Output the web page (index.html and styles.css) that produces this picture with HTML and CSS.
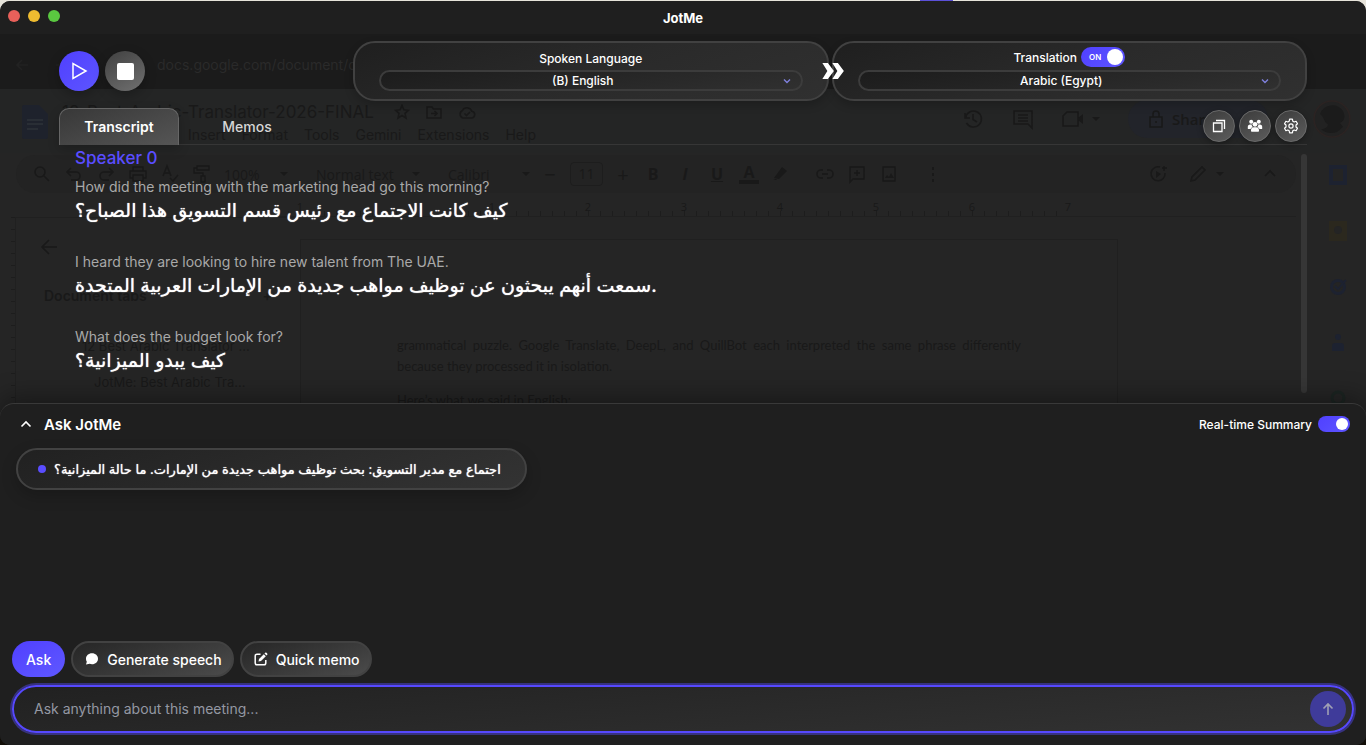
FILE: index.html
```html
<!DOCTYPE html>
<html lang="en">
<head>
    <meta charset="UTF-8">
    <meta name="viewport" content="width=device-width, initial-scale=1.0">
    <title>JotMe</title>
    <link rel="stylesheet" href="styles.css">
</head>
<body>
    <div class="window">
        <!-- Dimmed document showing through the overlay -->
        <div class="backdrop" aria-hidden="true">
            <div class="browser-bar">
                <svg width="16" height="16" viewBox="0 0 16 16"><path d="M14 8H3M8 3L3 8l5 5"/></svg>
                <svg width="16" height="16" viewBox="0 0 16 16"><path d="M2 8h11M8 3l5 5-5 5"/></svg>
                <span class="address">docs.google.com/document/d</span>
            </div>
            <div class="doc-header">
                <svg class="doc-logo" width="26" height="34" viewBox="0 0 26 34"><path d="M2 0h15l9 9v23a2 2 0 0 1-2 2H2a2 2 0 0 1-2-2V2a2 2 0 0 1 2-2z"/><path class="doc-lines" d="M5 15h16M5 19h16M5 24h11"/></svg>
                <div class="doc-heading">
                    <div class="doc-title">
                        <span>12-Best-Arabic-Translator-2026-FINAL</span>
                        <svg width="16" height="16" viewBox="0 0 16 16"><path d="M8 1.500l1.900 4.300 4.600.5-3.500 3 1 4.700-4-2.500L4 14l1-4.700-3.500-3 4.600-.5z"/></svg>
                        <svg width="16" height="16" viewBox="0 0 16 16"><path d="M1 3h5l1.500 2H15v9H1zM5 9.500h5M8.500 7l2.500 2.500L8.500 12"/></svg>
                        <svg width="18" height="16" viewBox="0 0 18 16"><path d="M5 14a4 4 0 0 1-.5-7.500 5 5 0 0 1 9.300.8A3.400 3.400 0 0 1 14 14zM6.500 9.500l2 2 3.500-3.500"/></svg>
                    </div>
                    <div class="doc-menu">
                        <span>Insert</span><span>Format</span><span>Tools</span><span>Gemini</span><span>Extensions</span><span>Help</span>
                    </div>
                </div>
                <div class="doc-actions">
                    <svg width="22" height="22" viewBox="0 0 22 22"><path d="M3 5v5h5M3.500 10a8 8 0 1 1 1 5M11 6v5.500l4 2.500"/></svg>
                    <svg width="22" height="22" viewBox="0 0 22 22"><path d="M2 3h18v17l-4-4H2zM6 7h10M6 10h10M6 13h10"/></svg>
                    <svg width="22" height="22" viewBox="0 0 22 22"><path d="M5 4h11v14H1V8z"/><path class="solid" d="M16 10l5-4v10l-5-4z"/></svg>
                    <i class="caret"></i>
                    <span class="share">
                        <svg width="16" height="18" viewBox="0 0 16 18"><path d="M2 7h12v10H2zM5 7V4a3 3 0 0 1 6 0v3M8 11v2"/></svg>
                        Share
                    </span>
                    <svg class="avatar" width="40" height="40" viewBox="0 0 40 40"><circle cx="20" cy="20" r="18"/><path class="face" d="M8 15a13 13 0 0 1 23-3c3 6 1 10-3 12l3 4-6 5c-6 2-12 1-16-3 4 0 7-2 7-5-4-1-3-6-8-10z"/></svg>
                </div>
            </div>
            <div class="doc-toolbar">
                <svg width="20" height="20" viewBox="0 0 20 20"><path d="M12 12l5 5M13 8a5 5 0 1 1-10 0 5 5 0 0 1 10 0z"/></svg>
                <svg width="20" height="20" viewBox="0 0 20 20"><path d="M7 4L3 8l4 4M3 8h9a4 4 0 0 1 0 8H7"/></svg>
                <svg width="20" height="20" viewBox="0 0 20 20"><path d="M13 4l4 4-4 4M17 8H8a4 4 0 0 0 0 8h5"/></svg>
                <svg width="20" height="20" viewBox="0 0 20 20"><path d="M5 7V3h10v4M5 14H2V7h16v7h-3M5 11h10v6H5z"/></svg>
                <svg width="20" height="20" viewBox="0 0 20 20"><path d="M3 12L7 2l4 10M4 9h6M10 14l3 3 5-6"/></svg>
                <svg width="20" height="20" viewBox="0 0 20 20"><path d="M5 2h12v4H5zM5 4H2v5h9v3M9 12h4v6H9z"/></svg>
                <span class="tool-zoom">100%</span><i class="caret"></i>
                <span class="tool-style">Normal text</span><i class="caret"></i>
                <span class="tool-font">Calibri</span><i class="caret"></i>
                <span class="tool-sign">−</span><span class="tool-size">11</span><span class="tool-sign">+</span>
                <b>B</b><b><em>I</em></b><b><u>U</u></b><b class="tool-color">A</b>
                <svg width="20" height="20" viewBox="0 0 20 20"><path class="solid" d="M3 14l8-11 5 4-8 8zM2 16l3-1 1 1z"/></svg>
                <svg class="group" width="20" height="20" viewBox="0 0 20 20"><path d="M8 6H6a4 4 0 0 0 0 8h2M12 6h2a4 4 0 0 1 0 8h-2M7 10h6"/></svg>
                <svg width="20" height="20" viewBox="0 0 20 20"><path d="M3 3h14v12H6l-3 3zM10 6v6M7 9h6"/></svg>
                <svg width="20" height="20" viewBox="0 0 20 20"><path d="M4 3h12v14H4z"/><path class="solid" d="M6 14l2-3 2 2 2-4 3 5z"/></svg>
                <svg class="group" width="20" height="20" viewBox="0 0 20 20"><path class="solid" d="M9 3h2v3H9zM9 9h2v3H9zM9 15h2v3H9z"/></svg>
                <span class="tool-end">
                    <svg width="20" height="20" viewBox="0 0 20 20"><path d="M12 3a7 7 0 1 0 5 6M16 2v5M14 4h5"/><path class="solid" d="M8 7l5 3-5 4z"/></svg>
                    <svg width="20" height="20" viewBox="0 0 20 20"><path d="M3 17l1-4L14 3l3 3L7 16z"/></svg>
                    <i class="caret"></i>
                    <svg class="fold" width="20" height="20" viewBox="0 0 20 20"><path d="M5 12l5-5 5 5"/></svg>
                </span>
            </div>
            <div class="ruler">
                <span>1</span><span></span><span>1</span><span>2</span><span>3</span><span>4</span><span>5</span><span>6</span><span>7</span>
            </div>
            <div class="doc-body">
                <div class="side-ruler"></div>
                <div class="outline">
                    <svg width="18" height="18" viewBox="0 0 18 18"><path d="M17 9H2M9 2L2 9l7 7"/></svg>
                    <div class="outline-title"><span>Document tabs</span><span>+</span></div>
                    <p>12 Best Arabic Translator …</p>
                    <p class="nested">JotMe: Best Arabic Tra…</p>
                </div>
                <div class="page">
                    <p>grammatical puzzle. Google Translate, DeepL, and QuillBot each interpreted the same phrase differently because they processed it in isolation.</p>
                    <p>Here’s what we said in English:</p>
                </div>
                <div class="rail">
                    <svg width="18" height="20" viewBox="0 0 18 20"><path class="blue" d="M0 0h18v20H0z"/><path class="hole" d="M4 4h10v12H4z"/></svg>
                    <svg width="18" height="20" viewBox="0 0 18 20"><path class="yellow" d="M0 0h18v20H0z"/><circle class="hole" cx="9" cy="9" r="4"/></svg>
                    <svg width="18" height="20" viewBox="0 0 18 20"><circle class="blue" cx="9" cy="10" r="8"/><circle class="hole" cx="9" cy="10" r="5"/><path class="tick" d="M6 9l3 3 8-9"/></svg>
                    <svg width="18" height="20" viewBox="0 0 18 20"><path class="blue" d="M3 18v-5a3 3 0 0 1 3-3h6a3 3 0 0 1 3 3v5zM6 4a3 3 0 1 1 6 0 3 3 0 0 1-6 0z"/></svg>
                    <svg width="18" height="20" viewBox="0 0 18 20"><circle class="ring" cx="9" cy="9" r="6"/></svg>
                </div>
            </div>
        </div>

        <header class="titlebar">
            <div class="lights">
                <span class="light red"></span>
                <span class="light amber"></span>
                <span class="light green"></span>
            </div>
            <h1>JotMe</h1>
        </header>

        <section class="controls">
            <button class="round play" aria-label="Play">
                <svg width="20" height="20" viewBox="0 0 20 20"><path d="M4 2.500v15L17 10z" fill="none" stroke="#fff" stroke-width="1.500" stroke-linejoin="miter"/></svg>
            </button>
            <button class="round stop" aria-label="Stop"><span></span></button>
            <div class="languages">
                <div class="lang-card">
                    <label for="spoken">Spoken Language</label>
                    <div class="select-wrap">
                        <select id="spoken"><option>(B) English</option></select>
                        <svg width="8" height="6" viewBox="0 0 8 6"><path d="M1 1.500l3 3 3-3"/></svg>
                    </div>
                </div>
                <svg class="arrows" width="24" height="18" viewBox="0 0 24 18"><path d="M1 1h5.500l6 8-6 8H1l5-8zM11 1h5.500l6 8-6 8H11l5-8z"/></svg>
                <div class="lang-card">
                    <div class="lang-top">
                        <label for="target">Translation</label>
                        <label class="switch big">
                            <input type="checkbox" aria-label="Translation on" checked>
                            <span class="on">ON</span>
                        </label>
                    </div>
                    <div class="select-wrap">
                        <select id="target"><option>Arabic (Egypt)</option></select>
                        <svg width="8" height="6" viewBox="0 0 8 6"><path d="M1 1.500l3 3 3-3"/></svg>
                    </div>
                </div>
            </div>
        </section>

        <nav class="tabs">
            <button class="tab active">Transcript</button>
            <button class="tab">Memos</button>
            <div class="tools">
                <button class="tool" aria-label="Copy">
                    <svg width="16" height="16" viewBox="0 0 16 16" fill="none" stroke="#fff" stroke-width="1.300"><path d="M2.500 5h8.500v8.500H2.500zM5 2.500h8.500V11"/></svg>
                </button>
                <button class="tool" aria-label="Participants">
                    <svg width="16" height="16" viewBox="0 0 16 16" fill="#fff"><circle cx="4.200" cy="3.800" r="2"/><circle cx="11.800" cy="3.800" r="2"/><circle cx="8" cy="6.300" r="2.400"/><path d="M.8 10.500V9a2.500 2.500 0 0 1 2.500-2.600h1.300A4 4 0 0 0 5.800 9 4 4 0 0 0 3.500 11H1.300a.5.5 0 0 1-.5-.5zM15.200 10.500V9a2.500 2.500 0 0 0-2.500-2.600h-1.300A4 4 0 0 1 10.200 9a4 4 0 0 1 2.300 2h2.200a.5.5 0 0 0 .5-.5zM4 13v-.8a3 3 0 0 1 3-2.900h2a3 3 0 0 1 3 2.900v.8a.8.8 0 0 1-.8.800H4.800A.8.8 0 0 1 4 13z"/></svg>
                </button>
                <button class="tool" aria-label="Settings">
                    <svg width="16" height="16" viewBox="0 0 16 16" fill="none" stroke="#fff" stroke-width="1.200" stroke-linejoin="round"><path d="M6.600 1.200h2.800l.4 2 1.400.8 1.900-.7 1.400 2.400L13 7v2l1.500 1.300-1.400 2.400-1.900-.7-1.400.8-.4 2H6.600l-.4-2-1.400-.8-1.900.7-1.400-2.400L3 9V7L1.500 5.700l1.400-2.400 1.900.7 1.400-.8z"/><circle cx="8" cy="8" r="2.100"/></svg>
                </button>
            </div>
        </nav>

        <main class="transcript">
            <div class="lines">
                <h2>Speaker 0</h2>
                <div class="entry">
                    <p class="source">How did the meeting with the marketing head go this morning?</p>
                    <p class="translated" lang="ar">كيف كانت الاجتماع مع رئيس قسم التسويق هذا الصباح؟</p>
                </div>
                <div class="entry">
                    <p class="source">I heard they are looking to hire new talent from The UAE.</p>
                    <p class="translated" lang="ar">سمعت أنهم يبحثون عن توظيف مواهب جديدة من الإمارات العربية المتحدة.</p>
                </div>
                <div class="entry">
                    <p class="source">What does the budget look for?</p>
                    <p class="translated" lang="ar">كيف يبدو الميزانية؟</p>
                </div>
            </div>
            <div class="scrollbar"></div>
        </main>

        <section class="ask-panel">
            <div class="ask-head">
                <button class="collapse" aria-label="Collapse">
                    <svg width="12" height="8" viewBox="0 0 12 8"><path d="M1.500 6.500L6 2l4.500 4.500" fill="none" stroke="#fff" stroke-width="1.600"/></svg>
                </button>
                <h2>Ask JotMe</h2>
                <label class="summary-label" for="realtime">Real-time Summary</label>
                <span class="switch small"><input type="checkbox" id="realtime" checked></span>
            </div>
            <div class="summary">
                <span class="dot"></span>
                <p lang="ar">اجتماع مع مدير التسويق: بحث توظيف مواهب جديدة من الإمارات. ما حالة الميزانية؟</p>
            </div>
            <div class="modes">
                <button class="mode primary">Ask</button>
                <button class="mode">
                    <svg width="14" height="14" viewBox="0 0 14 14"><path d="M7 1.200c3.500 0 6 2.400 6 5.500s-2.500 5.500-6 5.500c-.9 0-1.700-.1-2.400-.4L1 12.600l.8-2.800A5 5 0 0 1 1 6.700c0-3.100 2.500-5.500 6-5.500z" fill="#fff"/></svg>
                    Generate speech
                </button>
                <button class="mode">
                    <svg width="14" height="14" viewBox="0 0 14 14"><path d="M6.500 2.200H3A1.800 1.800 0 0 0 1.200 4v7A1.800 1.800 0 0 0 3 12.800h7a1.800 1.800 0 0 0 1.800-1.800V8" fill="none" stroke="#fff" stroke-width="1.500"/><path d="M4.500 9.500L5 7l4.800-4.800 2 2L7 9zM10.500 1.500l.7-.7a.9.9 0 0 1 1.300 0l.7.7a.9.900 0 0 1 0 1.300l-.7.7z" fill="#fff"/></svg>
                    Quick memo
                </button>
            </div>
            <form class="composer">
                <input type="text" aria-label="Question" placeholder="Ask anything about this meeting...">
                <button type="button" class="send" aria-label="Send">
                    <svg width="14" height="14" viewBox="0 0 14 14"><path d="M7 13V2M2.500 6.500L7 2l4.500 4.500"/></svg>
                </button>
            </form>
        </section>
    </div>
</body>
</html>
```
FILE: styles.css
```css
* {
    box-sizing: border-box;
}

body {
    margin: 0;
    padding-top: 1px;
    min-height: 100vh;
    display: flex;
    font-family: Inter, 'DejaVu Sans', sans-serif;
    font-size: 14px;
    color: #fff;
    background:
        linear-gradient(#5b50d8, #5b50d8) 69% 0 / 33px 1px no-repeat,
        linear-gradient(#e6e3da 50%, #120e08 50%);
}

h1, h2, p {
    margin: 0;
}

button {
    font: inherit;
    color: inherit;
    border: none;
    padding: 0;
    cursor: pointer;
    display: flex;
    align-items: center;
    justify-content: center;
}

.window {
    position: relative;
    flex: 1;
    display: flex;
    flex-direction: column;
    overflow: hidden;
    border-radius: 10px;
    background: #252525;
}

/* Title bar */
.titlebar {
    position: relative;
    height: 33px;
    display: grid;
    grid-template-columns: 1fr auto 1fr;
    align-items: center;
    padding: 0 8px;
    background: #1f1f1f;
}

.titlebar h1 {
    font-size: 13px;
    font-weight: 700;
}

.lights {
    display: flex;
    gap: 8px;
    padding-bottom: 4px;
}

.light {
    width: 12px;
    height: 12px;
    border-radius: 50%;
}

.red { background: #e8605a; }
.amber { background: #efbc30; }
.green { background: #5ac840; }

/* Player and languages */
.controls {
    position: relative;
    display: flex;
    align-items: center;
    gap: 6px;
    padding: 7px 59px;
}

.round {
    width: 40px;
    height: 40px;
    border-radius: 50%;
    box-shadow: 0 4px 12px rgba(0, 0, 0, 0.25);
}

.play {
    background: linear-gradient(135deg, #5040ff, #5d55ff);
}

.stop {
    background: linear-gradient(150deg, #404040, #707070);
}

.stop span {
    width: 17px;
    height: 17px;
    border-radius: 2px;
    background: #fff;
}

.languages {
    position: relative;
    flex: 1;
    display: grid;
    grid-template-columns: 1fr 1fr;
    gap: 3px;
    margin-left: 202px;
}

.lang-card {
    display: flex;
    flex-direction: column;
    align-items: center;
    height: 60px;
    padding: 6px 24px;
    border: 2px solid #414141;
    border-radius: 22px;
    background: linear-gradient(160deg, #1f1f1f, #2a2a2a 50%, #303030);
    box-shadow: 0 4px 10px rgba(0, 0, 0, 0.2);
    font-size: 12px;
    font-weight: 500;
}

.lang-card > label {
    line-height: 20px;
    padding-bottom: 1px;
}

.lang-top {
    display: flex;
    align-items: center;
    gap: 4px;
    height: 21px;
    padding-bottom: 5px;
}

.select-wrap {
    position: relative;
    width: 100%;
}

.select-wrap select {
    appearance: none;
    display: block;
    width: 100%;
    height: 21px;
    padding: 0 24px 0 8px;
    border: 2px solid #3c3c3c;
    border-radius: 11px;
    background: linear-gradient(170deg, #1c1c1c, #303030);
    color: #fff;
    font: inherit;
    line-height: 16px;
    text-align-last: center;
}

.select-wrap svg {
    position: absolute;
    right: 12px;
    top: 8px;
    fill: none;
    stroke: #7f80dc;
    stroke-width: 1.4;
}

.arrows {
    position: absolute;
    left: 50%;
    top: 50%;
    transform: translate(-36%, -50%);
    z-index: 1;
    fill: #fff;
}

/* Switches */
.switch {
    position: relative;
    display: flex;
    align-items: center;
}

.switch input {
    appearance: none;
    margin: 0;
    display: flex;
    align-items: center;
    justify-content: flex-end;
    background: linear-gradient(135deg, #5040ff, #5d55ff);
}

.switch input::after {
    content: "";
    border-radius: 50%;
    background: #fff;
}

.big input {
    width: 44px;
    height: 20px;
    padding: 2px;
    border-radius: 10px;
}

.big input::after {
    width: 16px;
    height: 16px;
}

.small input {
    width: 32px;
    height: 16px;
    padding: 2px;
    border-radius: 8px;
}

.small input::after {
    width: 12px;
    height: 12px;
}

.switch .on {
    position: absolute;
    left: 8px;
    font-size: 8px;
    font-weight: 600;
}

/* Tabs */
.tabs {
    position: relative;
    display: flex;
    gap: 8px;
    height: 37px;
    margin: 0 59px;
    border-bottom: 1px solid #363636;
}

.tab {
    width: 120px;
    height: 37px;
    background: none;
    color: #d6d6d6;
    font-weight: 500;
}

.tab.active {
    color: #fff;
    font-weight: 600;
    border: 1px solid #666;
    border-bottom: none;
    padding-bottom: 2px;
    border-radius: 10px 10px 0 0;
    background: linear-gradient(160deg, #383838, #555);
    box-shadow: 0 4px 12px rgba(0, 0, 0, 0.2);
}

.tools {
    display: flex;
    gap: 4px;
    margin-left: auto;
    padding-top: 2px;
}

.tool {
    width: 32px;
    height: 32px;
    border: 1px solid #6a6a6a;
    border-radius: 50%;
    background: linear-gradient(150deg, #3c3c3c, #5c5c5c);
    box-shadow: 0 2px 6px rgba(0, 0, 0, 0.3);
}

/* Transcript */
.transcript {
    position: relative;
    display: flex;
    justify-content: space-between;
    padding: 0 59px 10px;
}

.lines {
    padding: 0 16px 17px;
}

.lines h2 {
    font-size: 17px;
    font-weight: 500;
    line-height: 26px;
    padding-bottom: 4px;
    color: #5a4dff;
}

.entry {
    height: 51px;
    margin-bottom: 24px;
}

.entry:last-child {
    margin-bottom: 0;
}

.source {
    line-height: 24px;
    color: #a9a9a9;
}

.translated {
    font-size: 19px;
    line-height: 24px;
    text-shadow: 0 0 1px #fff;
}

.scrollbar {
    width: 6px;
    margin-top: 9px;
    border-radius: 3px;
    background: #363636;
}

/* Ask panel */
.ask-panel {
    position: relative;
    flex: 1;
    display: flex;
    flex-direction: column;
    padding: 8px 12px 12px;
    border-top: 1px solid #393939;
    border-radius: 14px 14px 0 0;
    background: #1f1f1f;
    box-shadow: 0 -6px 24px rgba(0, 0, 0, 0.35);
}

.ask-head {
    display: flex;
    align-items: center;
    height: 24px;
    padding: 0 4px;
}

.ask-head h2 {
    font-size: 15px;
    font-weight: 600;
}

.collapse {
    width: 20px;
    height: 20px;
    margin-right: 8px;
    background: none;
}

.summary-label {
    margin-left: auto;
    margin-right: 6px;
    font-size: 12px;
    font-weight: 500;
}

.summary {
    align-self: flex-start;
    display: flex;
    align-items: center;
    gap: 8px;
    height: 42px;
    margin: 12px 4px;
    padding: 0 24px 0 20px;
    border: 2px solid #424242;
    border-radius: 21px;
    background: linear-gradient(160deg, #212121, #333);
    box-shadow: 0 6px 16px rgba(0, 0, 0, 0.2);
    font-size: 13px;
}

.summary p {
    text-shadow: 0 0 1px #fff;
}

.dot {
    width: 8px;
    height: 8px;
    border-radius: 50%;
    background: #5a4dff;
}

.modes {
    display: flex;
    gap: 6px;
    margin-top: auto;
}

.mode {
    gap: 8px;
    height: 36px;
    padding: 0 10px 0 12px;
    border: 2px solid #424242;
    border-radius: 18px;
    background: linear-gradient(160deg, #262626, #4b4b4b);
    font-weight: 500;
}

.mode.primary {
    border: none;
    padding: 0 14px;
    background: linear-gradient(150deg, #5040ff, #5f58ff);
}

.composer {
    display: flex;
    align-items: center;
    height: 48px;
    margin-top: 8px;
    padding: 0 6px 0 20px;
    border: 2px solid #5648ff;
    border-radius: 24px;
    background: linear-gradient(175deg, #212121, #323232);
    box-shadow: 0 0 0 2px #37327f;
}

.composer input {
    flex: 1;
    min-width: 0;
    padding: 0 0 2px;
    border: none;
    outline: none;
    background: none;
    color: #fff;
    font: inherit;
}

.composer input::placeholder {
    color: #9498a3;
}

.send {
    width: 36px;
    height: 36px;
    border-radius: 50%;
    background: #3f3b9a;
}

.send svg {
    fill: none;
    stroke: #a0a0b4;
    stroke-width: 1.6;
}

/* Document behind the overlay */
.backdrop {
    position: absolute;
    top: 33px;
    left: 0;
    right: 0;
    bottom: 0;
    overflow: hidden;
    color: #191919;
    white-space: nowrap;
    font-family: 'Open Sans', sans-serif;
}

.backdrop svg {
    flex: none;
    fill: none;
    stroke: #191919;
    stroke-width: 1.6;
}

.backdrop .solid {
    fill: #191919;
    stroke: none;
}

.browser-bar {
    display: flex;
    align-items: center;
    gap: 24px;
    height: 55px;
    padding: 6px 14px 0;
    background: #1b1b1b;
}

.browser-bar svg {
    stroke: #222;
}

.address {
    margin-left: 63px;
    font-size: 14px;
    font-family: Inter, sans-serif;
    color: #2a2a2a;
}

.doc-header {
    display: flex;
    height: 64px;
    padding: 11px 14px 0 22px;
    background: #242525;
}

.backdrop .doc-logo {
    margin-top: 5px;
    fill: #1e222c;
    stroke: none;
}

.backdrop .doc-lines {
    stroke: #292e35;
    stroke-width: 2;
}

.doc-heading {
    margin-left: 14px;
}

.doc-title {
    display: flex;
    align-items: center;
    gap: 16px;
    height: 24px;
    font-family: Inter, sans-serif;
    font-size: 17px;
}

.doc-title span {
    margin-right: 4px;
}

.doc-menu {
    display: flex;
    gap: 16px;
    padding-left: 126px;
    line-height: 22px;
    font-family: Inter, sans-serif;
    font-size: 14px;
}

.doc-actions {
    display: flex;
    align-items: center;
    gap: 28px;
    height: 38px;
    margin-left: auto;
}

.doc-actions .caret {
    margin-left: -20px;
}

.share {
    display: flex;
    align-items: center;
    gap: 8px;
    width: 140px;
    height: 38px;
    margin-right: 16px;
    padding-left: 20px;
    border-radius: 19px;
    background: #22242a;
    font-size: 15px;
    font-weight: 600;
}

.backdrop .avatar {
    fill: #222;
    stroke: #2b2322;
}

.backdrop .face {
    fill: #1b1b1b;
    stroke: none;
}

.doc-toolbar {
    display: flex;
    align-items: center;
    gap: 12px;
    height: 38px;
    margin: 2px 70px 0 16px;
    padding: 0 16px;
    border-radius: 19px;
    background: #232323;
}

.doc-toolbar b {
    width: 20px;
    text-align: center;
    font-size: 16px;
}

.doc-toolbar .group {
    margin-left: 12px;
}

.doc-toolbar .tool-color {
    line-height: 16px;
    border-bottom: 4px solid #191919;
}

.tool-zoom { width: 44px; }
.tool-style { width: 84px; margin-left: 16px; }
.tool-font { width: 62px; margin-left: 16px; }

.tool-sign {
    width: 16px;
    text-align: center;
    font-size: 20px;
}

.tool-size {
    width: 33px;
    line-height: 22px;
    text-align: center;
    border: 1px solid #1d1d1d;
    border-radius: 4px;
}

.caret {
    border: 4px solid transparent;
    border-top-color: #191919;
    border-bottom: none;
}

.tool-end {
    display: flex;
    align-items: center;
    gap: 20px;
    margin-left: auto;
}

.tool-end .caret {
    margin-left: -12px;
}

.tool-end .fold {
    margin-left: 16px;
}

.ruler {
    display: flex;
    height: 24px;
    margin: 0 70px 0 252px;
    padding-top: 6px;
    border-bottom: 1px solid #202020;
    font-size: 11px;
    background: repeating-linear-gradient(90deg, #1d1d1d 0 1px, transparent 1px 12px) 0 100% / 816px 5px no-repeat;
}

.ruler span {
    width: 96px;
    text-align: center;
}

.doc-body {
    display: flex;
    height: 500px;
}

.side-ruler {
    width: 16px;
    border-right: 1px solid #202020;
    background: repeating-linear-gradient(#1d1d1d 0 1px, transparent 1px 12px) 100% 0 / 4px 100% no-repeat;
}

.outline {
    width: 284px;
    padding: 20px 20px 0 24px;
    font-family: Inter, sans-serif;
    border-top: 1px solid #202020;
}

.outline-title {
    display: flex;
    justify-content: space-between;
    height: 54px;
    padding: 28px 8px 0 4px;
    font-weight: 600;
}

.outline p {
    padding: 24px 0 0 42px;
    line-height: 18px;
    font-size: 13px;
}

.outline .nested {
    padding: 18px 0 0 54px;
}

.page {
    width: 818px;
    margin-top: 22px;
    padding: 95px 96px;
    border: 1px solid #202020;
    font-family: Lato, sans-serif;
    font-size: 13px;
    white-space: normal;
    line-height: 21px;
}

.page p {
    margin-bottom: 13px;
    text-align: justify;
}

.rail {
    display: flex;
    flex-direction: column;
    gap: 36px;
    margin-left: auto;
    margin-right: 19px;
    margin-top: -52px;
}

.rail svg { stroke: none; }
.rail .blue { fill: #1d2230; }
.rail .yellow { fill: #2b281e; }
.rail .hole { fill: #242424; }
.rail .tick { stroke: #1d2230; stroke-width: 2; }
.rail .ring { stroke: #1c2522; stroke-width: 3; }
```
